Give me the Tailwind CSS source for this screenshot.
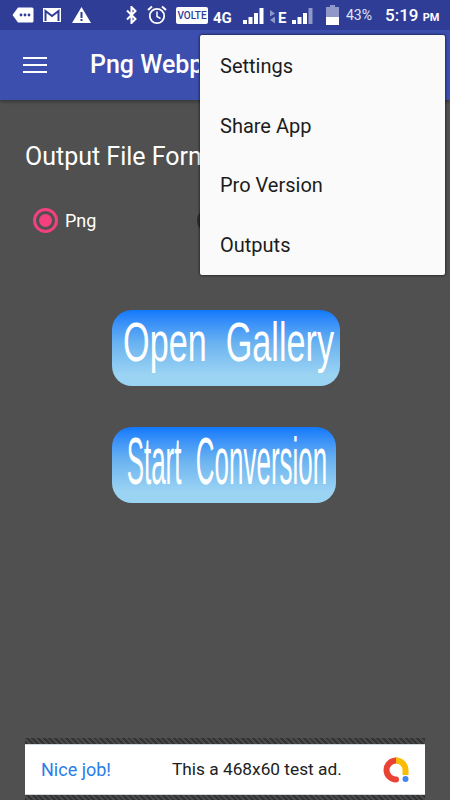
<!DOCTYPE html>
<html><head><meta charset="utf-8">
<script src="https://cdn.jsdelivr.net/npm/@tailwindcss/browser@4"></script>
</head>
<body class="m-0">
<div class="relative w-[450px] h-[800px] overflow-hidden bg-[#505050] font-['Roboto',sans-serif] flex flex-col">
  <!-- status bar -->
  <div class="h-[30px] shrink-0 bg-[#2f3d97] text-white relative flex items-center">
    <div class="flex items-center pl-[12px] gap-[9px]">
      <svg width="22" height="18" viewBox="0 0 22 18"><path d="M6 1.500h14a1.500 1.500 0 0 1 1.500 1.500v12a1.500 1.500 0 0 1-1.500 1.500H6L0.500 9z" fill="#fff"/><circle cx="9" cy="9" r="1.400" fill="#2f3d97"/><circle cx="13" cy="9" r="1.400" fill="#2f3d97"/><circle cx="17" cy="9" r="1.400" fill="#2f3d97"/></svg>
      <svg width="18" height="14" viewBox="0 0 18 14"><path d="M0 0h18v14H0z" fill="#fff"/><path d="M2.500 13V3l6.500 5 6.500-5v10" fill="none" stroke="#2f3d97" stroke-width="2"/></svg>
      <svg width="19" height="16" viewBox="0 0 19 16" class="ml-[2px]"><path d="M9.500 0L19 16H0z" fill="#fff"/><path d="M8.500 5h2v6h-2zM8.500 12h2v2h-2z" fill="#2f3d97"/></svg>
    </div>
    <svg class="absolute left-[125px] top-[6px]" width="13" height="18" viewBox="0 0 13 18"><path d="M2 4.500l8.500 8.500-4 4V1l4 4L2 13.500" fill="none" stroke="#fff" stroke-width="2"/></svg>
    <svg class="absolute left-[147px] top-[5px]" width="20" height="20" viewBox="0 0 20 20"><circle cx="10" cy="11" r="7.200" fill="none" stroke="#fff" stroke-width="1.800"/><path d="M10 6.500V11.500l3.500 2" fill="none" stroke="#fff" stroke-width="1.500"/><path d="M1 5l4-3.500M19 5l-4-3.500" stroke="#fff" stroke-width="2"/></svg>
    <div class="absolute left-[176px] top-[7px] w-[32px] h-[17px] bg-white rounded-[2px] text-[#2f3d97] text-[10px] font-medium leading-[17px] text-center">VOLTE</div>
    <div class="absolute left-[213px] top-[9px] text-[15px] leading-[18px] font-bold">4G</div>
    <svg class="absolute left-[243px] top-[7px]" width="21" height="18" viewBox="0 0 21 18"><path d="M0 13h4v4H0zM5.500 10h4v7h-4zM11 6h4v11h-4zM16.500 1h4v16h-4z" fill="#fff"/></svg>
    <svg class="absolute left-[269px] top-[9px]" width="7" height="15" viewBox="0 0 7 15"><path d="M1 1l5 3.500-5 3zM6 7.500v7l-5-3.500z" fill="#8f98c8"/></svg>
    <div class="absolute left-[278px] top-[9px] text-[15px] leading-[18px] font-bold">E</div>
    <svg class="absolute left-[292px] top-[7px]" width="21" height="18" viewBox="0 0 21 18"><path d="M0 13h4v4H0zM5.500 10h4v7h-4zM11 6h4v11h-4z" fill="#fff"/><path d="M16.500 1h4v16h-4z" fill="#8f98c8"/></svg>
    <svg class="absolute left-[326px] top-[5px]" width="13" height="20" viewBox="0 0 13 20"><path d="M4 0h5v2h4v18H0V2h4z" fill="#8f98c8"/><path d="M0 12h13v8H0z" fill="#fff"/></svg>
    <div class="absolute left-[346px] top-[7px] text-[14px] leading-[17px] text-[#e3e5f2]">43%</div>
    <div class="absolute left-[385px] top-[5px] text-[17px] leading-[20px] font-medium whitespace-nowrap">5:19 <span class="text-[11px] font-bold">PM</span></div>
  </div>
  <!-- toolbar -->
  <div class="h-[70px] shrink-0 bg-[#3c4eae] shadow-[0_2px_3px_rgba(0,0,0,0.3)] flex items-center pl-[23px]">
    <div class="flex flex-col gap-[5px] w-[24px]">
      <div class="h-[2px] bg-white"></div><div class="h-[2px] bg-white"></div><div class="h-[2px] bg-white"></div>
    </div>
    <div class="ml-[43px] w-[109px] overflow-hidden text-white text-[25px] font-medium whitespace-nowrap">Png Webp</div>
  </div>
  <!-- content -->
  <div class="pl-[25px] pt-[42px] w-[200px] overflow-hidden text-white text-[25px] leading-[30px] whitespace-nowrap">Output File Format</div>
  <div class="flex items-center pl-[33px] pt-[36px]">
    <div class="w-[25px] h-[25px] rounded-full border-[3px] border-[#f4407f] flex items-center justify-center"><div class="w-[13px] h-[13px] rounded-full bg-[#f4407f]"></div></div>
    <div class="ml-[7px] w-[33px] text-white text-[18px] leading-[24px]">Png</div>
    <div class="ml-[99px] w-[25px] h-[25px] rounded-full border-[3px] border-[#2e2e2e]"></div>
  </div>
  <div class="flex flex-col pl-[112px] pt-[77px] gap-[41px]">
    <div class="w-[228px] h-[76px] rounded-[20px] bg-gradient-to-b from-[#0f78fb] via-[#6cb4f0] via-45% to-[#9bd3f3] to-85% flex items-center justify-center overflow-hidden">
      <span class="inline-block text-white text-[30px] font-['Liberation_Sans',sans-serif] whitespace-pre translate-x-[3px] -translate-y-[7px] scale-x-[1.14] scale-y-[1.85]">Open  Gallery</span>
    </div>
    <div class="w-[224px] h-[76px] rounded-[20px] bg-gradient-to-b from-[#0f78fb] via-[#6cb4f0] via-45% to-[#9bd3f3] to-85% flex items-center justify-center overflow-hidden">
      <span class="inline-block text-white text-[30px] font-['Liberation_Sans',sans-serif] whitespace-pre translate-x-[3px] -translate-y-[5px] scale-x-[0.865] scale-y-[2.2]">Start  Conversion</span>
    </div>
  </div>
  <!-- ad -->
  <div class="absolute left-[25px] top-[738px] w-[400px] h-[62px] bg-[repeating-linear-gradient(45deg,#333_0,#333_2px,#4a4a4a_2px,#4a4a4a_4px)] pt-[6px]">
    <div class="h-[51px] bg-white border-y border-[#cfd8dc] flex items-center relative">
      <span class="ml-[16px] text-[#2a7de9] text-[18px]">Nice job!</span>
      <span class="absolute left-[147px] text-[#202124] text-[17.300px] whitespace-nowrap">This a 468x60 test ad.</span>
      <svg class="absolute left-[358px] top-[12px]" width="27" height="27" viewBox="0 0 27 27">
        <path d="M13 3.500A9.500 9.500 0 1 0 13 22.500" fill="none" stroke="#ea4335" stroke-width="6" stroke-linecap="round"/>
        <path d="M13 3.500A9.500 9.500 0 0 1 22.500 13V18" fill="none" stroke="#fbbc04" stroke-width="6"/>
        <circle cx="22.500" cy="22" r="3" fill="#4285f4"/>
      </svg>
    </div>
  </div>
  <!-- menu -->
  <div class="absolute left-[200px] top-[35px] w-[245px] h-[240px] bg-[#fafafa] rounded-[2px] shadow-[0_0_3px_rgba(0,0,0,0.9)] flex flex-col text-[#1c1c1c] text-[20px] pl-[20px] pt-[1px]">
    <div class="h-[60px] flex items-center">Settings</div>
    <div class="h-[60px] flex items-center">Share App</div>
    <div class="h-[60px] flex items-center">Pro Version</div>
    <div class="h-[60px] flex items-center">Outputs</div>
  </div>
</div>
</body></html>
